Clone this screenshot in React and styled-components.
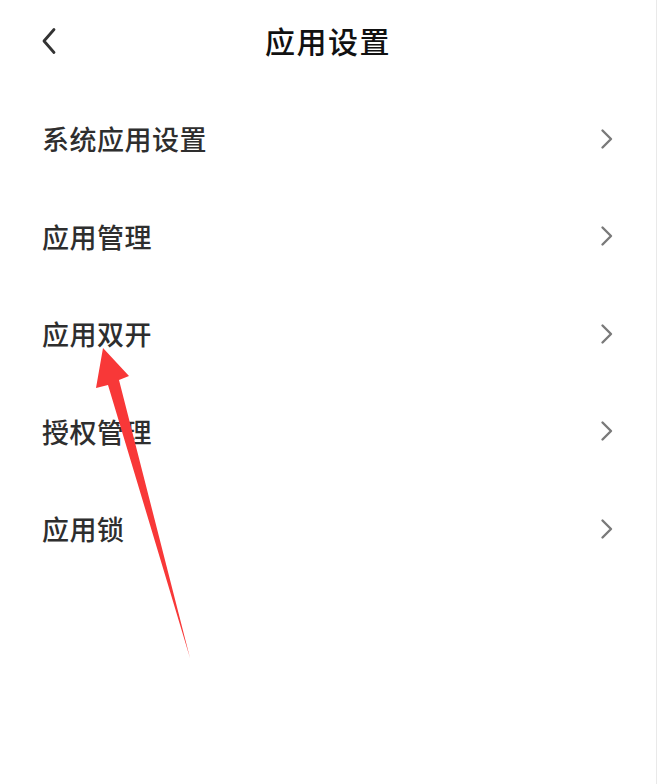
import React from "react";
import styled, { createGlobalStyle } from "styled-components";

const GlobalStyle = createGlobalStyle`
  html, body {
    margin: 0;
    padding: 0;
    background: #ffffff;
  }
  body {
    font-family: "Noto Sans CJK SC", "Noto Sans", sans-serif;
  }
`;

const Screen = styled.div`
  position: relative;
  width: 657px;
  height: 784px;
  background: #ffffff;
  border-right: 1px solid #e9e9e9;
  box-sizing: border-box;
  overflow: hidden;
`;

const Header = styled.header`
  position: relative;
  height: 80px;
  display: flex;
  align-items: center;
  justify-content: center;
`;

const BackButton = styled.button`
  position: absolute;
  left: 36px;
  top: 25px;
  width: 26px;
  height: 32px;
  padding: 0;
  border: none;
  background: none;
  display: flex;
  align-items: center;
  justify-content: center;
`;

const Title = styled.h1`
  margin: 0;
  font-size: 30px;
  font-weight: 500;
  color: #111;
  letter-spacing: 1.5px;
`;

const List = styled.ul`
  list-style: none;
  margin: 0;
  padding: 10px 0 0;
`;

const Row = styled.li`
  height: 97.5px;
  display: flex;
  align-items: center;
  justify-content: space-between;
  padding: 0 42px 0 42px;
`;

const Label = styled.span`
  font-size: 27px;
  font-weight: 500;
  color: #2e2e2e;
  letter-spacing: 0.5px;
`;

const Pointer = styled.svg`
  position: absolute;
  left: 0;
  top: 0;
  pointer-events: none;
`;

const Chevron = ({ dir = "right" }) =>
  dir === "right" ? (
    <svg width="14" height="22" viewBox="0 0 14 22">
      <path d="M2.5 2.5 L11 11 L2.5 19.5" fill="none" stroke="#7a7a7a" strokeWidth="2.4" strokeLinecap="round" strokeLinejoin="round" />
    </svg>
  ) : (
    <svg width="16" height="28" viewBox="0 0 16 28">
      <path d="M13 2.5 L3 14 L13 25.5" fill="none" stroke="#333" strokeWidth="2.8" strokeLinecap="round" strokeLinejoin="round" />
    </svg>
  );

const items = ["系统应用设置", "应用管理", "应用双开", "授权管理", "应用锁"];

export default function App() {
  return (
    <>
      <GlobalStyle />
      <Screen>
        <Header>
          <BackButton>
            <Chevron dir="left" />
          </BackButton>
          <Title>应用设置</Title>
        </Header>
        <List>
          {items.map((t) => (
            <Row key={t}>
              <Label>{t}</Label>
              <Chevron />
            </Row>
          ))}
        </List>
        <Pointer width="657" height="784" viewBox="0 0 657 784">
          <polygon
            points="103,348 129,376 119,380 190,658 108,385 96,388"
            fill="#f83838"
          />
        </Pointer>
      </Screen>
    </>
  );
}
